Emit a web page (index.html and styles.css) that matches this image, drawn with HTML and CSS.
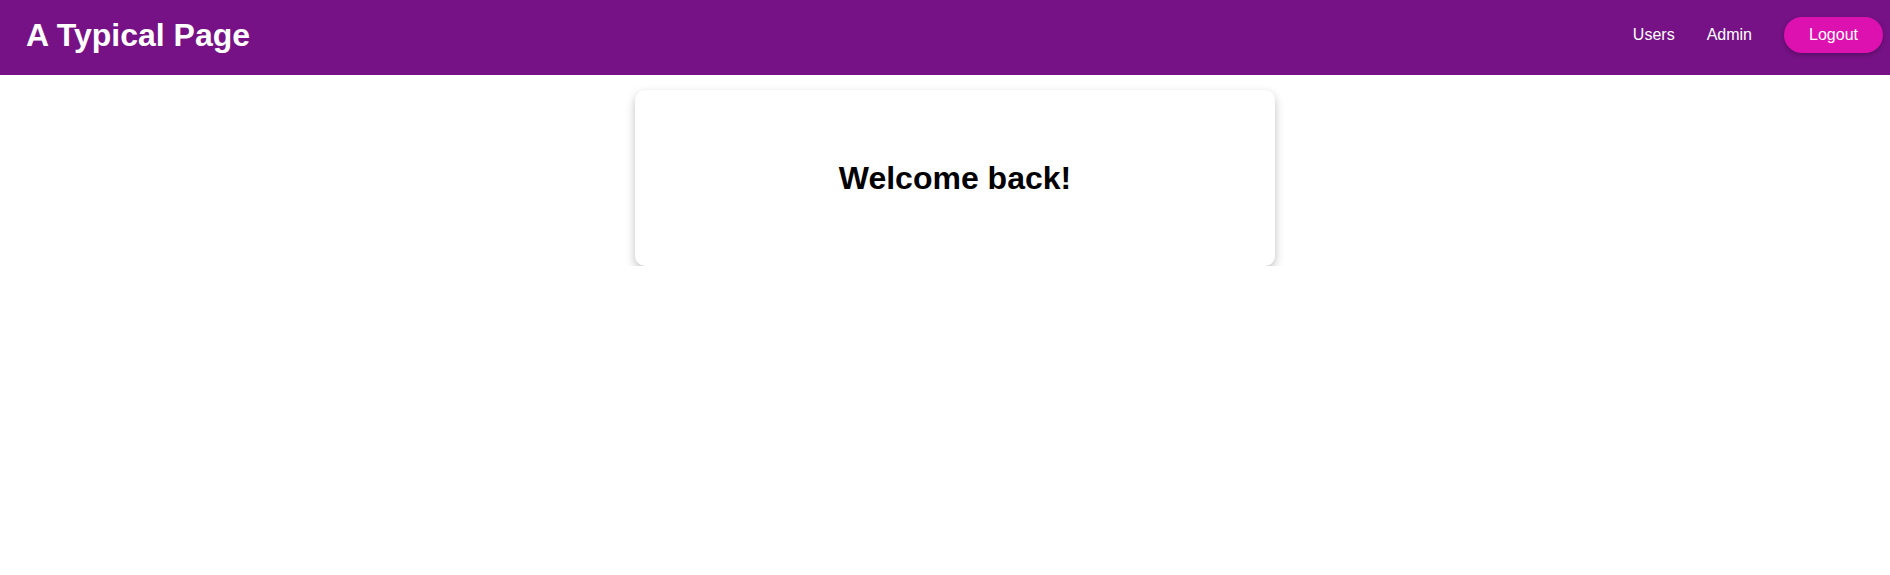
FILE: index.html
```html
<!DOCTYPE html>
<html lang="en">
<head>
<meta charset="utf-8">
<title>A Typical Page</title>
<link rel="stylesheet" href="styles.css">
</head>
<body>
<header class="topbar">
  <h1 class="brand">A Typical Page</h1>
  <nav class="nav">
    <a class="nav-link" href="#">Users</a>
    <a class="nav-link" href="#">Admin</a>
    <button class="logout" type="button">Logout</button>
  </nav>
</header>
<main class="main">
  <section class="card">
    <h2 class="welcome">Welcome back!</h2>
  </section>
</main>
</body>
</html>
```

FILE: styles.css
```css
* { box-sizing: border-box; }
html, body { margin: 0; padding: 0; background: #ffffff; }
body { font-family: "Liberation Sans", Arial, sans-serif; color: #000; }

.topbar {
  height: 75px;
  background: #761286;
  display: flex;
  align-items: center;
  justify-content: space-between;
  padding: 0 7px 0 26px;
}
.brand {
  margin: 0 0 4px 0;
  color: #ffffff;
  font-size: 32px;
  font-weight: bold;
  line-height: 37px;
}
.nav {
  display: flex;
  align-items: center;
  gap: 32px;
  padding-bottom: 5px;
}
.nav-link {
  color: #ffffff;
  text-decoration: none;
  font-size: 16px;
  line-height: 18px;
}
.logout {
  height: 36px;
  width: 99px;
  padding: 0;
  border: none;
  border-radius: 18px;
  background: #dc11b0;
  color: #ffffff;
  font-family: "Liberation Sans", Arial, sans-serif;
  font-size: 16px;
  box-shadow: 0 2px 5px rgba(0, 0, 0, 0.25);
  cursor: pointer;
}

.main {
  display: flex;
  justify-content: center;
  padding: 15px 0 0 20px;
}
.card {
  width: 640px;
  height: 176px;
  background: #ffffff;
  border-radius: 10px;
  box-shadow: 0 4px 10px rgba(0, 0, 0, 0.25);
  display: flex;
  align-items: center;
  justify-content: center;
}
.welcome {
  margin: 0;
  font-size: 32px;
  font-weight: bold;
  line-height: 37px;
}
```
